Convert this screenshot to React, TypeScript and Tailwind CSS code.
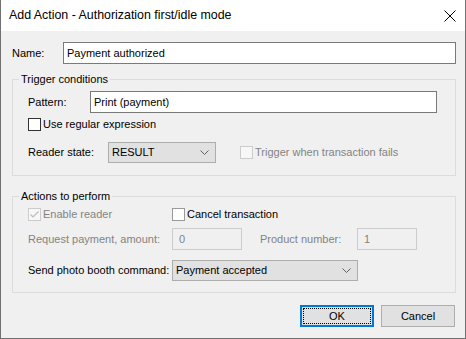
import React from "react";

const GRAY = "text-[#838383]";

function Check({ checked, disabled, enabledDark = true, label, className = "" }: { checked?: boolean; disabled?: boolean; enabledDark?: boolean; label: string; className?: string }) {
  return (
    <div className={"flex items-center h-[13px] " + className}>
      <div
        className={
          "w-[13px] h-[13px] border flex items-center justify-center " +
          (disabled ? "border-[#cccccc] bg-[#f7f7f7]" : enabledDark ? "border-[#333333] bg-white" : "border-[#999999] bg-white")
        }
      >
        {checked && (
          <svg width="11" height="11" viewBox="0 0 11 11">
            <polyline points="1.5,5.5 4,8 9.5,2.5" fill="none" stroke={disabled ? "#bcbcbc" : "#000"} strokeWidth="1.2" />
          </svg>
        )}
      </div>
      <span className={"ml-[2px] whitespace-nowrap " + (disabled ? GRAY : "")}>{label}</span>
    </div>
  );
}

function Select({ value, width }: { value: string; width: string }) {
  return (
    <div className={"h-[21px] border border-[#adadad] bg-[#e1e1e1] flex items-center justify-between pl-[3px] pr-[6px] " + width}>
      <span className="whitespace-nowrap">{value}</span>
      <svg width="9" height="5" viewBox="0 0 9 5">
        <polyline points="0.5,0.5 4.5,4.5 8.5,0.5" fill="none" stroke="#606060" strokeWidth="1" />
      </svg>
    </div>
  );
}

export default function App() {
  return (
    <div className="w-[466px] h-[339px] bg-[#f0f0f0] border-x border-b border-[#707070] font-['Liberation_Sans',Arial,sans-serif] text-[11px] text-black flex flex-col overflow-hidden">
      <div className="h-[31px] bg-white flex items-center justify-between pl-[8px] pr-[9px] shrink-0">
        <span className="text-[12.4px] whitespace-nowrap">Add Action - Authorization first/idle mode</span>
        <svg width="12" height="12" viewBox="0 0 12 12">
          <line x1="0.5" y1="0.5" x2="11.5" y2="11.5" stroke="#000" strokeWidth="1" />
          <line x1="11.5" y1="0.5" x2="0.5" y2="11.5" stroke="#000" strokeWidth="1" />
        </svg>
      </div>
      <div className="flex-1 pl-[11px] pr-[9px] flex flex-col">
        <div className="mt-[11px] h-[22px] flex items-center">
          <span className="w-[51px]">Name:</span>
          <div className="flex-1 h-[22px] border border-[#7a7a7a] bg-white flex items-center pl-[3px]">Payment authorized</div>
        </div>

        <fieldset className="mt-[7px] border border-[#dcdcdc]">
          <legend className="ml-[6px] px-[2px] leading-[16px]">Trigger conditions</legend>
          <div className="pl-[15px] pb-[12px]">
            <div className="mt-[4px] h-[22px] flex items-center">
              <span className="w-[62px]">Pattern:</span>
              <div className="w-[347px] h-[22px] border border-[#7a7a7a] bg-white flex items-center pl-[3px]">Print (payment)</div>
            </div>
            <Check label="Use regular expression" className="mt-[5px]" />
            <div className="mt-[11px] h-[21px] flex items-center">
              <span className="w-[80px]">Reader state:</span>
              <Select value="RESULT" width="w-[108px]" />
              <Check label="Trigger when transaction fails" disabled className="ml-[24px]" />
            </div>
          </div>
        </fieldset>

        <fieldset className="mt-[12px] border border-[#dcdcdc]">
          <legend className="ml-[6px] px-[2px] leading-[16px]">Actions to perform</legend>
          <div className="pl-[15px] pb-[11px]">
            <div className="mt-[4px] flex items-center">
              <Check label="Enable reader" checked disabled className="w-[144px]" />
              <Check label="Cancel transaction" enabledDark={false} />
            </div>
            <div className="mt-[7px] h-[22px] flex items-center">
              <span className={"w-[144px] " + GRAY}>Request payment, amount:</span>
              <div className="w-[70px] h-[22px] border border-[#cccccc] flex items-center pl-[6px] text-[#838383]">0</div>
              <span className={"ml-[18px] w-[97px] " + GRAY}>Product number:</span>
              <div className="w-[60px] h-[22px] border border-[#cccccc] flex items-center pl-[6px] text-[#838383]">1</div>
            </div>
            <div className="mt-[10px] h-[21px] flex items-center">
              <span className="w-[144px]">Send photo booth command:</span>
              <Select value="Payment accepted" width="w-[186px]" />
            </div>
          </div>
        </fieldset>

        <div className="mt-[12px] flex justify-end gap-[7px] pr-[1px]">
          <div className="w-[74px] h-[22px] border-2 border-[#0078d7] bg-[#e1e1e1] flex items-center justify-center outline-1 outline-dotted outline-black -outline-offset-4">
            OK
          </div>
          <div className="w-[74px] h-[22px] border border-[#adadad] bg-[#e1e1e1] flex items-center justify-center">Cancel</div>
        </div>
      </div>
    </div>
  );
}
